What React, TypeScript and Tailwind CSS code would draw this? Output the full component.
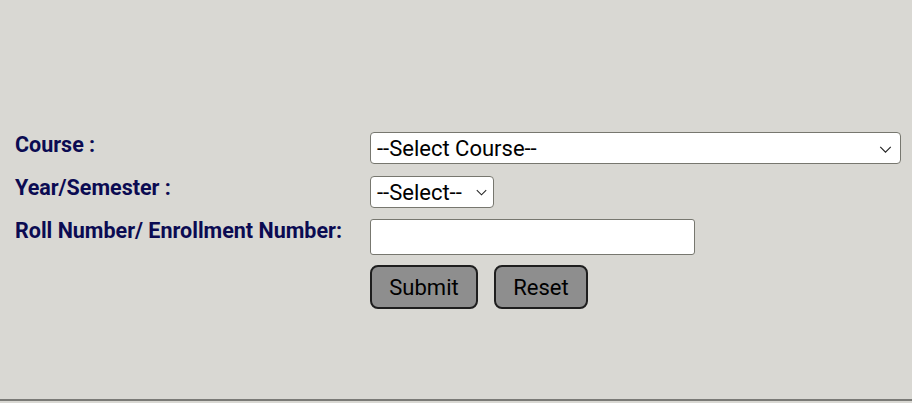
function Chevron({ className }: { className?: string }) {
  return (
    <svg
      viewBox="0 0 14 8"
      className={className}
      fill="none"
      stroke="#222"
      strokeWidth="1.3"
    >
      <path d="M1 1l6 6 6-6" />
    </svg>
  );
}

export default function App() {
  return (
    <div className="w-[912px] h-[403px] bg-[#d9d8d3] font-['Roboto',sans-serif]">
      <div className="h-[401px] border-b-2 border-[#7a7a76] pt-[132px] pl-[15px]">
        {/* Course */}
        <div className="flex h-[32px]">
          <label className="w-[355px] pt-[1px] text-[21.5px] leading-6 font-bold text-[#0b0b52]">
            Course :
          </label>
          <div className="relative w-[531px] h-[32px] bg-white border border-[#77776f] rounded-[4px] flex items-center">
            <span className="pl-[6px] text-[22px] text-black">--Select Course--</span>
            <Chevron className="absolute right-[8px] top-[13px] w-[13px] h-[7px]" />
          </div>
        </div>

        {/* Year */}
        <div className="flex h-[32px] mt-[12px]">
          <label className="w-[355px] text-[21.5px] leading-6 font-bold text-[#0b0b52]">
            Year/Semester :
          </label>
          <div className="relative w-[124px] h-[32px] bg-white border border-[#77776f] rounded-[4px] flex items-center">
            <span className="pl-[6px] text-[22px] text-black">--Select--</span>
            <Chevron className="absolute right-[6px] top-[12px] w-[11px] h-[7px]" />
          </div>
        </div>

        {/* Roll */}
        <div className="flex h-[36px] mt-[11px]">
          <label className="w-[355px] text-[21.5px] leading-6 font-bold text-[#0b0b52]">
            Roll Number/ Enrollment Number:
          </label>
          <input
            type="text"
            className="w-[325px] h-[36px] bg-white border border-[#77776f] rounded-[3px] outline-none"
          />
        </div>

        {/* Buttons */}
        <div className="flex mt-[10px] pl-[355px] gap-[16px]">
          <button className="w-[108px] h-[44px] bg-[#8e8e8e] border-2 border-[#1e1e1e] rounded-[8px] text-[22px] text-black">
            Submit
          </button>
          <button className="w-[94px] h-[44px] bg-[#8e8e8e] border-2 border-[#1e1e1e] rounded-[8px] text-[22px] text-black">
            Reset
          </button>
        </div>
      </div>
    </div>
  );
}
